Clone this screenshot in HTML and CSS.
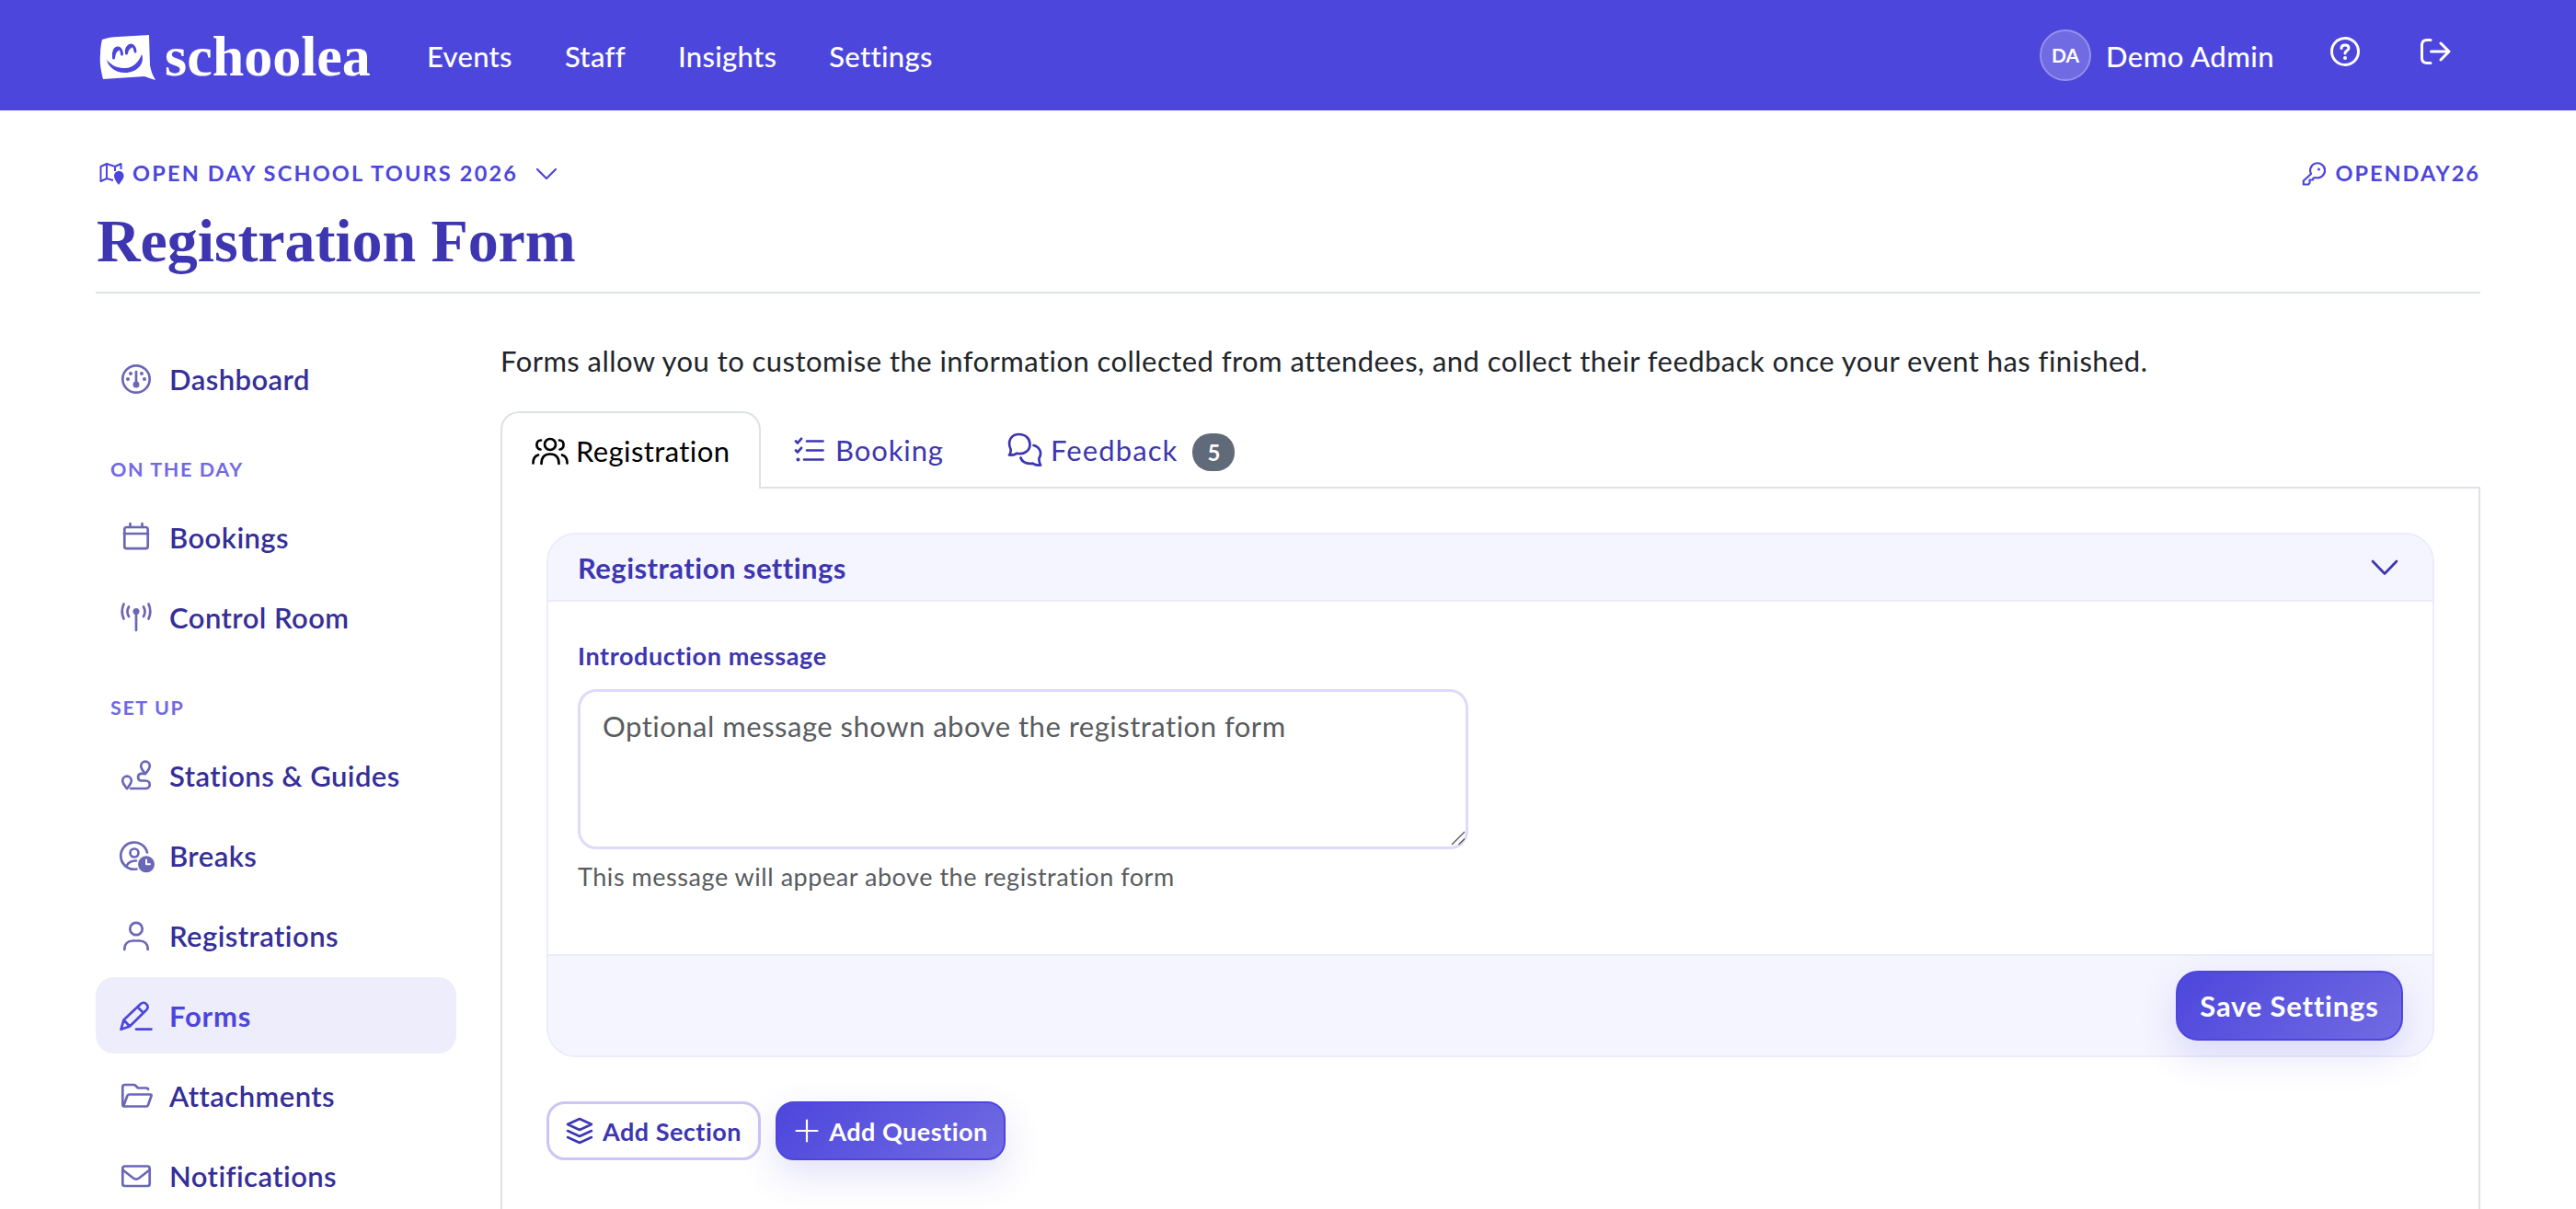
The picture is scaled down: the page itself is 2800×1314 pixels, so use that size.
FILE: index.html
```html
<!DOCTYPE html>
<html lang="en">
<head>
    <meta charset="UTF-8">
    <meta name="viewport" content="width=device-width, initial-scale=1.0">
    <title>Registration Form - schoolea</title>
    <link rel="stylesheet" href="styles.css">
</head>
<body>
    <header class="topbar">
        <a class="brand">
            <svg class="brand-mark" width="62" height="50" viewBox="0 0 62 50">
                <path d="M3 5C9 3 14 2 20 2L54 0L55 33C56 39 58 44 61 49C56 48 53 46 49 45L4 48C2 40 0 30 1 21C1 15 2 9 3 5Z" fill="#fff"/>
                <path d="M15.500 25C14.500 18 17 14 20 14C23 14 24.500 18 24.500 21M29.500 20C28.500 14 32 11 34.500 11C37 11 39 15 39 18M15.500 25C16 20 18 17 20 16M29.500 20C30 16 32 14 34 13" fill="none" stroke="#4d46dc" stroke-width="3" stroke-linecap="round"/>
                <path d="M8 27C14 34 20 36 28 36C37 36 43 29 46 21C50 31 41 41 28 41C16 41 9 33 8 27Z" fill="#4d46dc"/>
            </svg>
            <span class="brand-name">schoolea</span>
        </a>
        <nav class="main-nav">
            <a>Events</a>
            <a>Staff</a>
            <a>Insights</a>
            <a>Settings</a>
        </nav>
        <div class="account">
            <span class="avatar">DA</span>
            <span class="account-name">Demo Admin</span>
            <svg class="help-icon" width="34" height="34" viewBox="0 0 34 34" fill="none" stroke="#fff" stroke-width="3" stroke-linecap="round" stroke-linejoin="round">
                <circle cx="17" cy="17" r="14.500"/>
                <path d="M13 13.500C13 11 14.500 10 17 10C19.500 10 21 11.500 21 13.300C21 16 17 16 17 19"/>
                <circle cx="17" cy="24" r="2" fill="#fff" stroke="none"/>
            </svg>
            <svg class="logout-icon" width="34" height="30" viewBox="0 0 34 30" fill="none" stroke="#fff" stroke-width="3" stroke-linecap="round" stroke-linejoin="round">
                <path d="M12 2.500H8C4.500 2.500 2.500 4.500 2.500 8V22C2.500 25.500 4.500 27.500 8 27.500H12M12.500 15H32M23 6L32 15L23 24"/>
            </svg>
        </div>
    </header>

    <div class="page">
        <div class="page-header">
            <div class="event-row">
                <a class="event-switcher">
                    <svg width="28" height="26" viewBox="0 0 28 26" fill="none" stroke="#4d46dc" stroke-width="2" stroke-linejoin="round">
                        <path d="M15 20L8 18L1.500 21V5L8 2L17 5L23.500 2V8M8 2V18M17 5V10"/>
                        <path d="M21 25C18 21 16 18 16 15A5.300 5.300 0 0 1 26.600 15C26.600 18 24 21 21 25Z" fill="#4d46dc" stroke="none"/>
                    </svg>
                    <span class="event-name">OPEN DAY SCHOOL TOURS 2026</span>
                    <svg class="event-chevron" width="24" height="14" viewBox="0 0 24 14" fill="none" stroke="#4d46dc" stroke-width="2.200" stroke-linecap="round" stroke-linejoin="round"><path d="M2 2L12 12L22 2"/></svg>
                </a>
                <span class="event-code">
                    <svg width="26" height="26" viewBox="0 0 26 26" fill="none" stroke="#4d46dc" stroke-width="2.200" stroke-linejoin="round">
                        <path d="M10 13A8 8 0 1 1 15 17L12.500 17.500L12 19.500H8.500V23L7 24.500H1.800V20.500Z"/>
                        <circle cx="18.500" cy="8" r="1.500" fill="#4d46dc" stroke="none"/>
                    </svg>
                    <span>OPENDAY26</span>
                </span>
            </div>
            <h1>Registration Form</h1>
        </div>

        <div class="columns">
            <aside class="sidebar">
                <a class="side-link">
                    <svg class="side-icon" viewBox="0 0 40 40">
                        <circle cx="20" cy="20" r="14.700"/>
                        <path d="M20 12V26"/>
                        <g class="solid"><circle cx="20" cy="26" r="3.500"/><circle cx="11" cy="20" r="2"/><circle cx="14" cy="14" r="2"/><circle cx="26" cy="14" r="2"/><circle cx="29" cy="20" r="2"/></g>
                    </svg>
                    <span>Dashboard</span>
                </a>

                <div class="side-heading">ON THE DAY</div>
                <a class="side-link">
                    <svg class="side-icon" viewBox="0 0 40 40">
                        <rect x="7.300" y="9" width="25.400" height="23.200" rx="2.500"/>
                        <path d="M7 16H33M13.500 5V9M26.500 5V9"/>
                    </svg>
                    <span>Bookings</span>
                </a>
                <a class="side-link">
                    <svg class="side-icon" viewBox="0 0 40 40">
                        <path d="M20 13V34M6.500 5.500C4 11 4 16 6.500 21.500M33.500 5.500C36 11 36 16 33.500 21.500M12 8.500C10 12 10 15.500 12 19M28 8.500C30 12 30 15.500 28 19"/>
                        <circle class="solid" cx="20" cy="13.500" r="3.500"/>
                    </svg>
                    <span>Control Room</span>
                </a>

                <div class="side-heading">SET UP</div>
                <a class="side-link">
                    <svg class="side-icon" viewBox="0 0 40 40">
                        <path d="M30 18C27 14.500 25.200 12 25.200 9.500A4.800 4.800 0 0 1 34.800 9.500C34.800 12 33 14.500 30 18ZM10 34C7 30.500 5.200 28 5.200 25.500A4.800 4.800 0 0 1 14.800 25.500C14.800 28 13 30.500 10 34ZM14 34H30.500A4.200 4.200 0 0 0 30.500 25.500H25A4 4 0 0 1 25 17.800H29"/>
                    </svg>
                    <span>Stations &amp; Guides</span>
                </a>
                <a class="side-link">
                    <svg class="side-icon" viewBox="0 0 40 40">
                        <path d="M32 16.500A14.600 14.600 0 1 0 20.500 34.500M9.500 31C11.500 27 14.500 25.500 20 25.500"/>
                        <circle cx="18" cy="17" r="4.500"/>
                        <circle class="solid" cx="31" cy="29.300" r="9"/>
                        <path class="clock-hand" d="M31 24.500V29.300H35"/>
                    </svg>
                    <span>Breaks</span>
                </a>
                <a class="side-link">
                    <svg class="side-icon" viewBox="0 0 40 40">
                        <circle cx="20" cy="12.500" r="6.700"/>
                        <path d="M7.300 35V34C7.300 29 11 25.500 16 25.500H24C29 25.500 32.700 29 32.700 34V35"/>
                    </svg>
                    <span>Registrations</span>
                </a>
                <a class="side-link active">
                    <svg class="side-icon" viewBox="0 0 40 40">
                        <path d="M3.500 34.800L6.500 24.500L25 7C27 5.200 29.500 5.600 31 7.200C33 9 33.200 11.500 31.500 13.300L13 31.500ZM21.500 10.500L28 17M6.500 24.500L13 31.500M20 34.600H36.500"/>
                    </svg>
                    <span>Forms</span>
                </a>
                <a class="side-link">
                    <svg class="side-icon" viewBox="0 0 40 40">
                        <path d="M33 13C33 12 32 11.500 31 11.500H22L19 8.500Q18 8 17 8H7.500Q5.300 8 5.300 10.500V29.500Q5.300 31.500 7.500 31.500H31Q32.500 31.500 33 30L36.500 20Q37 18.500 35.500 18.500H13Q11 18.500 10.300 20L6.500 30.500"/>
                    </svg>
                    <span>Attachments</span>
                </a>
                <a class="side-link">
                    <svg class="side-icon" viewBox="0 0 40 40">
                        <rect x="5.300" y="9.500" width="29.400" height="21.500" rx="2.500"/>
                        <path d="M6 14L17 22.500Q20 24.700 23 22.500L34 14"/>
                    </svg>
                    <span>Notifications</span>
                </a>
            </aside>

            <main class="content">
                <p class="intro">Forms allow you to customise the information collected from attendees, and collect their feedback once your event has finished.</p>

                <div class="tabs">
                    <a class="tab tab-registration active">
                        <svg width="40" height="32" viewBox="0 0 40 32" fill="none" stroke="currentColor" stroke-width="2.700" stroke-linecap="round">
                            <circle cx="20" cy="9" r="6"/>
                            <path d="M10.500 30C10.500 23 14 19.500 20 19.500S29.500 23 29.500 30M10 4.500C4 4.500 4 14 9.500 14.500M30 4.500C36 4.500 36 14 30.500 14.500M1.500 29.500C1.500 24 3.500 21.500 7 20.500M38.500 29.500C38.500 24 36.500 21.500 33 20.500"/>
                        </svg>
                        <span>Registration</span>
                    </a>
                    <a class="tab tab-booking">
                        <svg width="34" height="28" viewBox="0 0 34 28" fill="none" stroke="currentColor" stroke-width="2.700" stroke-linecap="round" stroke-linejoin="round">
                            <path d="M14 4.500H31.500M14 14.500H31.500M11 24.500H31.500M2 4.500L4 6.500L8 1.800M2 14.500L4 16.500L8 11.800"/>
                            <circle cx="4.500" cy="24.500" r="2" fill="currentColor" stroke="none"/>
                        </svg>
                        <span>Booking</span>
                    </a>
                    <a class="tab tab-feedback">
                        <svg width="38" height="38" viewBox="0 0 38 38" fill="none" stroke="currentColor" stroke-width="2.700" stroke-linecap="round" stroke-linejoin="round">
                            <path d="M2 24.500C3.500 22.500 4 20.500 3.500 18C-.5 9 4.500 2 12.500 2C20 2 24.500 7 24.500 13C24.500 20 18 24.500 10.500 22.700C8 24.500 5 25 2 24.500ZM28.500 14C35 15.500 38 22 34.500 28C34 31 35 33 36 35.500C33 36 30 35.500 27.500 33.700C21.500 34.500 16 32.500 14.500 27.500"/>
                        </svg>
                        <span>Feedback</span>
                        <span class="badge">5</span>
                    </a>
                </div>

                <section class="tab-panel">
                    <div class="card">
                        <div class="card-header">
                            <h2>Registration settings</h2>
                            <svg width="30" height="18" viewBox="0 0 30 18" fill="none" stroke="#3d36b0" stroke-width="2.700" stroke-linecap="round" stroke-linejoin="round"><path d="M2 2L15 15.500L28 2"/></svg>
                        </div>
                        <div class="card-body">
                            <label for="introMessage">Introduction message</label>
                            <div class="textarea-wrap">
                                <textarea id="introMessage" placeholder="Optional message shown above the registration form"></textarea>
                                <svg class="resize-grip" width="16" height="16" viewBox="0 0 16 16" stroke="#555" stroke-width="1.300"><path d="M1 15L15 1M8.500 15L15 8.500"/></svg>
                            </div>
                            <p class="help-text">This message will appear above the registration form</p>
                        </div>
                        <div class="card-footer">
                            <button class="btn btn-primary btn-save">Save Settings</button>
                        </div>
                    </div>

                    <div class="actions">
                        <button class="btn btn-outline">
                            <svg width="30" height="30" viewBox="0 0 30 30" fill="none" stroke="currentColor" stroke-width="2.500" stroke-linecap="round" stroke-linejoin="round">
                                <path d="M15 2L28 8L15 14L2 8ZM2 15L15 21L28 15M2 22L15 28L28 22"/>
                            </svg>
                            <span>Add Section</span>
                        </button>
                        <button class="btn btn-primary btn-question">
                            <svg width="26" height="26" viewBox="0 0 26 26" stroke="currentColor" stroke-width="2.200" stroke-linecap="round"><path d="M13 1.500V24.500M1.500 13H24.500"/></svg>
                            <span>Add Question</span>
                        </button>
                    </div>
                </section>
            </main>
        </div>
    </div>
</body>
</html>
```
FILE: styles.css
```css
* {
    box-sizing: border-box;
}
body {
    margin: 0;
    height: 1314px;
    overflow: hidden;
    display: flex;
    flex-direction: column;
    background-color: #fff;
    color: #212529;
    font-family: Lato, "Liberation Sans", sans-serif;
    font-size: 31px;
    letter-spacing: 0.45px;
    line-height: 1.5;
}
svg {
    display: block;
    flex: none;
}
h1, h2, p {
    margin: 0;
}

/* Top bar */
.topbar {
    flex: none;
    height: 120px;
    padding: 0 104px;
    display: flex;
    align-items: center;
    background-color: #4d46dc;
    color: #fff;
    font-weight: 500;
}
.brand {
    display: flex;
    align-items: center;
    gap: 9px;
    width: 360px;
    padding-left: 4px;
}
.brand-mark {
    margin-top: 5px;
}
.brand-name {
    padding-top: 2px;
    font-family: "Liberation Serif", serif;
    font-size: 62px;
    font-weight: bold;
    letter-spacing: 0;
    line-height: 1;
}
.main-nav {
    display: flex;
    flex: 1;
    gap: 57px;
    padding-top: 2px;
    letter-spacing: 0.3px;
}
.account {
    display: flex;
    align-items: center;
}
.avatar {
    width: 56px;
    height: 56px;
    border: 2px solid #9490ea;
    border-radius: 50%;
    background-color: #716be3;
    font-size: 21px;
    font-weight: bold;
    letter-spacing: 0;
    line-height: 52px;
    text-align: center;
}
.account-name {
    margin-left: 16px;
    width: 243px;
    padding-top: 2px;
}
.help-icon {
    margin: -8px 64px 0 0;
}
.logout-icon {
    margin: -8px 32px 0 0;
}

/* Page heading */
.page {
    flex: 1;
    display: flex;
    flex-direction: column;
    padding: 0 104px;
}
.page-header {
    height: 199px;
    padding-top: 50px;
    border-bottom: 2px solid #dee2e6;
}
.event-row, .event-switcher, .event-code {
    display: flex;
    align-items: center;
}
.event-row {
    justify-content: space-between;
    height: 37px;
    color: #4d46dc;
    font-size: 23.5px;
    font-weight: bold;
    letter-spacing: 2.2px;
}
.event-switcher {
    padding-left: 4px;
    gap: 8px;
}
.event-chevron {
    margin-left: 11px;
}
.event-code {
    gap: 10px;
    letter-spacing: 2px;
}
h1 {
    padding-left: 1px;
    color: #3d36b0;
    font-family: "Liberation Serif", serif;
    font-size: 66px;
    font-weight: bold;
    letter-spacing: -0.1px;
    line-height: 109px;
}

/* Sidebar */
.columns {
    flex: 1;
    display: flex;
    gap: 48px;
}
.sidebar {
    width: 392px;
    padding-top: 51px;
}
.side-link {
    display: flex;
    align-items: center;
    gap: 16px;
    height: 83px;
    margin-bottom: 4px;
    padding-left: 24px;
    border-radius: 20px;
    color: #352f97;
    font-weight: 600;
}
.side-link span {
    padding-top: 2px;
}
.side-icon {
    width: 40px;
    height: 40px;
    fill: none;
    stroke: #6b67b7;
    stroke-width: 2.7;
    stroke-linecap: round;
    stroke-linejoin: round;
}
.side-icon .solid {
    fill: #6b67b7;
    stroke: none;
}
.side-icon .clock-hand {
    stroke: #fff;
    stroke-width: 2;
}
.side-link.active {
    background-color: #eeedfb;
    color: #4d46dc;
    font-weight: bold;
    letter-spacing: 0.8px;
}
.side-link.active .side-icon {
    stroke: #4d46dc;
}
.side-heading {
    height: 85px;
    padding: 37px 0 0 16px;
    color: #7169e4;
    font-size: 21.5px;
    font-weight: bold;
    letter-spacing: 1.6px;
}

/* Content */
.content {
    flex: 1;
    display: flex;
    flex-direction: column;
    padding-top: 50px;
}
.intro {
    height: 78px;
    line-height: 46px;
}
.tabs {
    display: flex;
    height: 84px;
}
.tab {
    display: flex;
    align-items: center;
    gap: 9px;
    height: 84px;
    color: #3d36b0;
    letter-spacing: 0.9px;
    white-space: nowrap;
}
.tab.active {
    position: relative; /* covers the panel's top border */
    border: 2px solid #dee2e6;
    border-bottom: none;
    border-radius: 20px 20px 0 0;
    background-color: #fff;
    color: #000;
    letter-spacing: 0.4px;
}
.tab-registration {
    width: 283px;
    padding-left: 32px;
    gap: 8px;
}
.tab-booking {
    width: 268px;
    padding-left: 36px;
    gap: 11px;
}
.tab-feedback {
    letter-spacing: 1.1px;
}
.badge {
    width: 46px;
    height: 41px;
    margin: 4px 0 0 7px;
    border-radius: 20px;
    background-color: #616a78;
    color: #fff;
    font-size: 24px;
    font-weight: bold;
    letter-spacing: 0;
    line-height: 41px;
    text-align: center;
}
.tab-panel {
    flex: 1;
    margin-top: -2px;
    padding: 48px;
    border: 2px solid #dee2e6;
    border-bottom: none;
}
.card {
    height: 570px;
    display: flex;
    flex-direction: column;
    border: 2px solid #ecebfc;
    border-radius: 32px;
}
.card-header {
    display: flex;
    align-items: center;
    justify-content: space-between;
    height: 73px;
    padding: 1px 37px 0 32px;
    border-bottom: 2px solid #ecebfc;
    border-radius: 30px 30px 0 0;
    background-color: #f5f5ff;
}
h2 {
    color: #3d36b0;
    font-size: 31px;
    font-weight: bold;
}
.card-body {
    flex: 1;
    padding: 39px 32px 0;
}
label {
    display: block;
    height: 56px;
    color: #3d36b0;
    font-size: 27px;
    font-weight: bold;
    letter-spacing: 0.6px;
    line-height: 40px;
}
.textarea-wrap {
    position: relative;
    width: 968px;
    height: 174px;
}
textarea {
    width: 100%;
    height: 100%;
    padding: 14px 24px;
    border: 3px solid #dedafa;
    border-radius: 20px;
    font: inherit;
    letter-spacing: 0.5px;
    resize: none;
}
textarea::placeholder {
    color: #595c5f;
    opacity: 1;
}
.resize-grip {
    position: absolute;
    right: 3px;
    bottom: 4px;
}
.help-text {
    padding-top: 10px;
    color: #595c5f;
    font-size: 27px;
    letter-spacing: 0.54px;
    line-height: 40px;
}
.card-footer {
    display: flex;
    align-items: center;
    justify-content: flex-end;
    height: 110px;
    padding-right: 32px;
    border-top: 2px solid #ecebfc;
    border-radius: 0 0 30px 30px;
    background-color: #f5f5ff;
}
.btn {
    display: flex;
    align-items: center;
    justify-content: center;
    font-family: inherit;
    font-size: 27px;
    font-weight: bold;
    letter-spacing: 0.5px;
    white-space: nowrap;
}
.btn-primary {
    border: 2px solid #4d46dc;
    background: linear-gradient(135deg, #4d46dc, #716be3);
    box-shadow: 0 16px 40px rgba(77, 70, 220, 0.16);
    color: #fff;
}
.btn-save {
    width: 247px;
    height: 76px;
    border-radius: 24px;
    font-size: 31px;
    letter-spacing: 0.8px;
}
.actions {
    display: flex;
    gap: 16px;
    margin-top: 48px;
}
.btn-outline {
    width: 233px;
    height: 64px;
    gap: 10px;
    border: 3px solid #cac6f5;
    border-radius: 20px;
    background-color: #fff;
    color: #3d36b0;
}
.btn-question {
    width: 250px;
    height: 64px;
    gap: 11px;
    padding-left: 8px;
    border-radius: 20px;
}
```
